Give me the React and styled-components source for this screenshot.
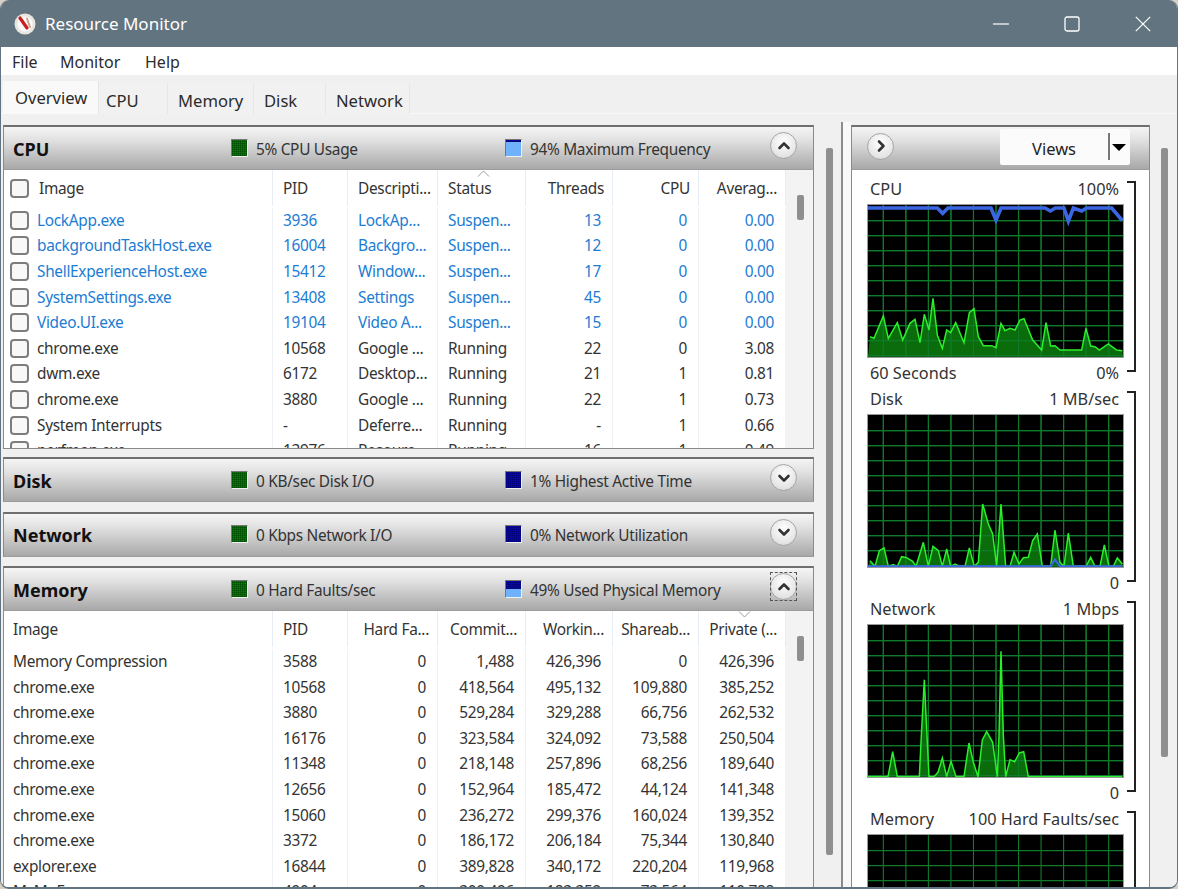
import styled, { createGlobalStyle } from 'styled-components';

const GlobalStyle = createGlobalStyle`
  html, body {
    margin: 0;
    padding: 0;
    background: #d8cfc8;
  }
  * {
    box-sizing: border-box;
  }
`;

const Window = styled.div`
  width: 1178px;
  height: 889px;
  display: flex;
  flex-direction: column;
  overflow: hidden;
  background: #f0f0f0;
  border: solid #62747f;
  border-width: 0 1px 2px 1px;
  border-radius: 9px 9px 9px 9px;
  font-family: 'Noto Sans', 'Open Sans', sans-serif;
  font-size: 15.4px;
  letter-spacing: -0.3px;
  color: #2b2b2b;
`;

const TitleBar = styled.div`
  flex: none;
  height: 47px;
  margin: 0 -1px;
  background: #62747f;
  color: #fff;
  display: flex;
  align-items: center;
  padding-left: 14px;
  font-size: 17px;
  letter-spacing: 0;
`;

const AppIcon = styled.svg`
  width: 22px;
  height: 22px;
  margin-right: 9px;
`;

const TitleControls = styled.div`
  margin-left: auto;
  display: flex;
  height: 100%;
`;

const ControlButton = styled.div`
  width: 71px;
  display: flex;
  align-items: center;
  justify-content: center;
`;

const MenuBar = styled.div`
  flex: none;
  height: 28px;
  padding: 1px 0 0 11px;
  background: #fff;
  display: grid;
  grid-template-columns: 48px 85px auto;
  align-items: center;
  font-size: 16px;
  letter-spacing: 0;
`;

const TabStrip = styled.div`
  flex: none;
  height: 39px;
  padding: 6px 0 0 2px;
  display: flex;
  align-items: flex-start;
  background: #f0f0f0;
  border-bottom: 1px solid #f8f8f8;
`;

const Tab = styled.div`
  height: ${(p) => (p.$active ? 33 : 30)}px;
  width: ${(p) => p.$width}px;
  margin-top: ${(p) => (p.$active ? 0 : 3)}px;
  padding-left: ${(p) => p.$pad}px;
  line-height: 34px;
  background: ${(p) => (p.$active ? '#f9f9f9' : '#f1f1f1')};
  border-right: 1px solid #e6e6e6;
  font-size: 16.6px;
  letter-spacing: 0;
`;

const Main = styled.div`
  flex: 1;
  min-height: 0;
  display: flex;
  padding-top: 8px;
  background: #f0f0f0;
`;

const LeftColumn = styled.div`
  flex: none;
  width: 811px;
  margin-left: 2px;
  display: flex;
  flex-direction: column;
  gap: 9.4px;
  padding-top: 3px;
`;

const Section = styled.section`
  flex: ${(p) => (p.$grow ? '1 0 auto' : 'none')};
  border: solid #8a8a8a;
  border-width: 0 1px;
  ${(p) => (p.$boxed ? 'border-bottom-width: 1px; margin-bottom: -1px;' : '')}
`;

const SectionBar = styled.div`
  height: 45px;
  padding-left: 9px;
  display: flex;
  align-items: center;
  border-top: 2px solid #6f6f6f;
  border-bottom: 1px solid #9c9c9c;
  background: linear-gradient(#f5f5f5, #e2e2e2 30%, #a8a8a8);
  position: relative;
  margin: 0 -1px;
  border-left: 1px solid #8a8a8a;
  border-right: 1px solid #8a8a8a;
`;

const SectionTitle = styled.h2`
  margin: 0;
  width: 218px;
  padding-top: 1px;
  font-size: 18px;
  font-weight: 700;
  letter-spacing: 0;
  color: #111;
`;

const LegendItem = styled.div`
  width: ${(p) => p.$width}px;
  display: flex;
  align-items: center;
  gap: 8px;
  color: #333;
  white-space: nowrap;
`;

const LegendText = styled.span`
  padding-top: 2px;
`;

const swatchGrid = (angle) =>
  `repeating-linear-gradient(${angle}deg, rgba(0, 0, 0, 0.22) 0 1px, transparent 1px 2px)`;

const Swatch = styled.span`
  width: 17px;
  height: 18px;
  flex: none;
  margin-bottom: 1px;
  border: 1px solid #eef2ee;
  border-left-color: #777;
  border-top-color: #777;
  background:
    ${swatchGrid(0)} top / 100% ${(p) => p.$level}% no-repeat,
    ${swatchGrid(90)} top / 100% ${(p) => p.$level}% no-repeat,
    linear-gradient(${(p) => p.$fill} ${(p) => p.$level}%, #6fb1fb ${(p) => p.$level}%);
`;

const RoundButton = styled.button`
  position: absolute;
  right: 16px;
  top: 5px;
  width: 27px;
  height: 27px;
  padding: 0;
  border-radius: 50%;
  border: 1px solid #a5a5a5;
  background: radial-gradient(circle at 50% 35%, #ffffff, #e4e4e4 70%, #c8c8c8);
  display: flex;
  align-items: center;
  justify-content: center;
  ${(p) =>
    p.$focused
      ? `&::before {
          content: '';
          position: absolute;
          inset: -2px -1px;
          border: 1px dashed #555;
        }`
      : ''}
`;

const TableArea = styled.div`
  height: ${(p) => p.$height}px;
  background: #fff;
  overflow: hidden;
  display: grid;
  grid-template-columns: 1fr 27px;
`;

const Rows = styled.div`
  min-width: 0;
`;

const Columns = styled.div`
  display: grid;
  grid-template-columns: 269px 75px 90px 88px 87px 86px 87px;
  align-items: center;
`;

const HeaderRow = styled(Columns)`
  height: 36px;
  margin-bottom: 1.5px;
`;

const Row = styled(Columns)`
  height: 25.6px;
  color: ${(p) => (p.$suspended ? '#1b7cd3' : '#333')};
`;

const HeaderCell = styled.div`
  height: 100%;
  display: flex;
  align-items: center;
  justify-content: ${(p) => (p.$right ? 'flex-end' : 'flex-start')};
  padding: 0 ${(p) => (p.$right ? 8 : 4)}px 0 10px;
  border-right: 1px solid #e6edf4;
  position: relative;
  white-space: nowrap;
  color: #333;
`;

const Cell = styled.div`
  height: 100%;
  display: flex;
  align-items: center;
  justify-content: ${(p) => (p.$right ? 'flex-end' : 'flex-start')};
  padding: 0 ${(p) => (p.$right ? 11 : 4)}px 0 10px;
  border-right: 1px solid #eef2f7;
  white-space: nowrap;
  overflow: hidden;
`;

const ImageCell = styled(Cell)`
  padding-left: ${(p) => (p.$check ? 6 : 9)}px;
  gap: 8px;
`;

const ImageHeader = styled(HeaderCell)`
  padding-left: ${(p) => (p.$check ? 6 : 9)}px;
  gap: 10px;
`;

const CheckBox = styled.span`
  width: 19px;
  height: 19px;
  flex: none;
  border: 2px solid #7d7d7d;
  border-radius: 4px;
  background: #f8f8f8;
`;

const SortMark = styled.svg`
  position: absolute;
  top: ${(p) => p.$top}px;
  left: ${(p) => p.$left}px;
  width: 13px;
  height: 7px;
`;

const TableGutter = styled.div`
  background: #f3f3f3;
  padding: 25px 0 0 11px;
`;

const Thumb = styled.div`
  width: ${(p) => p.$width}px;
  height: ${(p) => p.$height}px;
  background: #8f8f8f;
  border-radius: 2px;
`;

const PageGutter = styled.div`
  flex: none;
  width: ${(p) => p.$width}px;
  padding: 26px 0 0 ${(p) => p.$left}px;
  background: #f0f0f0;
  ${(p) => (p.$divider ? 'border-right: 2px solid #8b8b8b;' : '')}
`;

const Spacer = styled.div`
  flex: none;
  width: 8px;
  background: #f8f8f8;
`;

const RightPanel = styled.div`
  flex: none;
  width: 299px;
  margin-top: 3px;
  background: #fff;
  border: solid #8a8a8a;
  border-width: 0 1px;
  box-shadow: 3px 0 0 #f8f8f8;
`;

const PanelBar = styled(SectionBar)`
  padding-left: 15px;
`;

const PanelArrow = styled(RoundButton)`
  position: static;
  margin-bottom: 4px;
`;

const ViewsButton = styled.div`
  position: absolute;
  left: 148px;
  top: 2px;
  width: 130px;
  height: 36px;
  padding: 2px 0 0 32px;
  border-radius: 2px;
  background: #fbfbfb;
  display: flex;
  align-items: center;
  font-size: 16.5px;
  letter-spacing: 0;
  color: #222;
`;

const ViewsDivider = styled.span`
  position: absolute;
  left: 108px;
  top: 4px;
  width: 2px;
  height: 27px;
  background: #777;
`;

const ViewsArrow = styled.span`
  position: absolute;
  left: 112px;
  top: 15px;
  border: solid transparent;
  border-width: 7px 7px 0;
  border-top-color: #000;
`;

const GraphList = styled.div`
  padding: 8px 0 0 16px;
`;

const GraphBlock = styled.div`
  height: 210px;
  display: grid;
  grid-template-columns: 255px 13px;
  grid-template-rows: 27px 152px 31px;
  column-gap: 4px;
`;

const GraphLabels = styled.div`
  grid-column: 1;
  display: flex;
  justify-content: space-between;
  align-items: ${(p) => (p.$bottom ? 'center' : 'flex-start')};
  padding: 0 4px 0 2px;
  color: #333;
  font-size: 16.3px;
  letter-spacing: 0;
  line-height: 22px;
`;

const Bracket = styled.div`
  grid-column: 2;
  grid-row: 1 / 4;
  height: 191px;
  margin-top: 3px;
  border: solid #222;
  border-width: 2px 2px 2px 0;
  width: 9px;
`;

const GraphFrame = styled.div`
  grid-column: 1;
  background: #000;
  box-shadow: 0 0 0 1px #9a9a9a;
  overflow: hidden;
`;

const GraphSvg = styled.svg`
  display: block;
  width: 255px;
  height: 152px;
`;

const cpuRows = [
  ['LockApp.exe', '3936', 'LockAp...', 'Suspen...', '13', '0', '0.00', true],
  ['backgroundTaskHost.exe', '16004', 'Backgro...', 'Suspen...', '12', '0', '0.00', true],
  ['ShellExperienceHost.exe', '15412', 'Window...', 'Suspen...', '17', '0', '0.00', true],
  ['SystemSettings.exe', '13408', 'Settings', 'Suspen...', '45', '0', '0.00', true],
  ['Video.UI.exe', '19104', 'Video A...', 'Suspen...', '15', '0', '0.00', true],
  ['chrome.exe', '10568', 'Google ...', 'Running', '22', '0', '3.08'],
  ['dwm.exe', '6172', 'Desktop...', 'Running', '21', '1', '0.81'],
  ['chrome.exe', '3880', 'Google ...', 'Running', '22', '1', '0.73'],
  ['System Interrupts', '-', 'Deferre...', 'Running', '-', '1', '0.66'],
  ['perfmon.exe', '13976', 'Resourc...', 'Running', '16', '1', '0.49'],
];

const memoryRows = [
  ['Memory Compression', '3588', '0', '1,488', '426,396', '0', '426,396'],
  ['chrome.exe', '10568', '0', '418,564', '495,132', '109,880', '385,252'],
  ['chrome.exe', '3880', '0', '529,284', '329,288', '66,756', '262,532'],
  ['chrome.exe', '16176', '0', '323,584', '324,092', '73,588', '250,504'],
  ['chrome.exe', '11348', '0', '218,148', '257,896', '68,256', '189,640'],
  ['chrome.exe', '12656', '0', '152,964', '185,472', '44,124', '141,348'],
  ['chrome.exe', '15060', '0', '236,272', '299,376', '160,024', '139,352'],
  ['chrome.exe', '3372', '0', '186,172', '206,184', '75,344', '130,840'],
  ['explorer.exe', '16844', '0', '389,828', '340,172', '220,204', '119,968'],
  ['MsMpEng.exe', '4904', '0', '300,496', '183,352', '73,564', '110,788'],
];

// graph traces, traced in 3x reference pixels so they line up with the grid
const cpuLoad = '30,470 42,475 70,408 85,475 112,428 128,480 150,430 165,418 180,488 193,403 207,450 219,355 232,465 247,505 260,450 272,458 287,428 312,488 328,398 342,386 355,470 370,497 395,497 408,503 423,430 435,452 450,445 465,450 480,420 492,416 518,480 545,510 558,428 572,498 585,497 600,510 650,510 665,510 678,445 692,498 705,500 718,510 745,492 770,510 787,512';
const cpuFreq = '24,84 232,84 248,100 264,84 393,84 408,120 423,84 555,84 571,93 586,84 612,84 625,123 640,84 665,93 680,84 755,84 787,122';
const diskLoad = '30,525 45,542 58,495 72,487 85,542 100,537 112,542 125,513 140,516 158,527 168,542 190,470 205,542 219,482 235,495 247,542 260,490 272,542 285,535 300,542 315,542 328,487 343,542 355,530 368,355 385,415 398,445 410,542 423,355 437,542 450,542 462,500 477,535 490,516 505,515 518,465 532,445 547,542 572,542 585,433 600,530 612,542 625,442 640,542 665,542 678,542 692,515 705,542 720,542 733,478 747,542 760,542 772,517 787,535';
const diskActive = '24,542 570,542 585,522 600,542 787,542';
const netLoad = '24,543 84,543 98,468 112,543 178,543 185,400 193,252 200,400 207,543 222,543 234,530 247,487 260,543 273,497 288,543 312,543 327,442 340,500 354,543 367,433 380,408 398,440 412,543 417,420 423,167 430,420 437,543 450,492 464,498 478,472 491,468 505,543 787,543';

function GridLines({ top }) {
  const xs = Array.from({ length: 11 }, (_, i) => 70 + i * 67.6);
  const ys = Array.from({ length: 10 }, (_, i) => top + 47 + i * 45);
  return (
    <g stroke="#0f7a2a" strokeWidth="3.4">
      {xs.map((x) => (
        <line key={x} x1={x} x2={x} y1={top} y2={top + 460} />
      ))}
      {ys.map((y) => (
        <line key={y} x1="24" x2="789" y1={y} y2={y} />
      ))}
    </g>
  );
}

function Graph({ top, load, line, lineWidth }) {
  const base = top + 455;
  return (
    <GraphFrame>
      <GraphSvg viewBox={`24 ${top} 765 456`} preserveAspectRatio="none">
        <GridLines top={top} />
        {load && (
          <>
            <polygon points={`24,${base} ${load} 789,${base}`} fill="#0c7f0c" fillOpacity="0.85" />
            <GridLines top={top} />
            <polyline points={load} fill="none" stroke="#2bef2b" strokeWidth="4.5" />
          </>
        )}
        {line && <polyline points={line} fill="none" stroke="#3a66e4" strokeWidth={lineWidth} />}
      </GraphSvg>
    </GraphFrame>
  );
}

function GraphPanel({ name, max, left, min, top, load, line, lineWidth }) {
  return (
    <GraphBlock>
      <GraphLabels>
        <span>{name}</span>
        <span>{max}</span>
      </GraphLabels>
      <Bracket />
      <Graph top={top} load={load} line={line} lineWidth={lineWidth} />
      <GraphLabels $bottom>
        <span>{left}</span>
        <span>{min}</span>
      </GraphLabels>
    </GraphBlock>
  );
}

function Chevron({ dir }) {
  const paths = {
    up: 'M2.5 9 7 4.5 11.5 9',
    down: 'M2.5 5 7 9.5 11.5 5',
    right: 'M5 2.5 9.5 7 5 11.5',
  };
  return (
    <svg width="14" height="14" viewBox="0 0 14 14">
      <path d={paths[dir]} fill="none" stroke="#333" strokeWidth="2.6" strokeLinecap="round" strokeLinejoin="round" />
    </svg>
  );
}

function Bar({ title, first, second, dir, focused, level }) {
  return (
    <SectionBar>
      <SectionTitle>{title}</SectionTitle>
      <LegendItem $width={274}>
        <Swatch $fill="#067f06" $level={100} />
        <LegendText>{first}</LegendText>
      </LegendItem>
      <LegendItem $width={240}>
        <Swatch $fill="#0505c0" $level={level} />
        <LegendText>{second}</LegendText>
      </LegendItem>
      <RoundButton $focused={focused}>
        <Chevron dir={dir} />
      </RoundButton>
    </SectionBar>
  );
}

export default function App() {
  return (
    <>
      <GlobalStyle />
      <Window>
        <TitleBar>
          <AppIcon viewBox="0 0 22 22">
            <circle cx="11" cy="11" r="10.5" fill="#e9e6e2" />
            <circle cx="11" cy="11" r="7.5" fill="#fbfbfb" />
            <path d="M6 5 13 15" stroke="#c81e1e" strokeWidth="3.2" strokeLinecap="round" />
            <path d="M13 5.5 16 14" stroke="#c9a58a" strokeWidth="2" strokeLinecap="round" />
          </AppIcon>
          Resource Monitor
          <TitleControls>
            <ControlButton>
              <svg width="16" height="2" viewBox="0 0 16 2">
                <line x1="0" x2="16" y1="1" y2="1" stroke="#fff" strokeWidth="1.2" />
              </svg>
            </ControlButton>
            <ControlButton>
              <svg width="16" height="16" viewBox="0 0 16 16">
                <rect x="1" y="1" width="14" height="14" rx="2" fill="none" stroke="#fff" strokeWidth="1.3" />
              </svg>
            </ControlButton>
            <ControlButton>
              <svg width="16" height="16" viewBox="0 0 16 16">
                <path d="M.8.8 15.2 15.2M15.2.8.8 15.2" stroke="#fff" strokeWidth="1.2" />
              </svg>
            </ControlButton>
          </TitleControls>
        </TitleBar>
        <MenuBar>
          <span>File</span>
          <span>Monitor</span>
          <span>Help</span>
        </MenuBar>
        <TabStrip>
          <Tab $active $width={96} $pad={12}>Overview</Tab>
          <Tab $width={69} $pad={7}>CPU</Tab>
          <Tab $width={86} $pad={10}>Memory</Tab>
          <Tab $width={72} $pad={10}>Disk</Tab>
          <Tab $width={84} $pad={10}>Network</Tab>
        </TabStrip>
        <Main>
          <LeftColumn>
            <Section $boxed>
              <Bar title="CPU" first="5% CPU Usage" second="94% Maximum Frequency" dir="up" level={12} />
              <TableArea $height={278}>
                <Rows>
                  <HeaderRow>
                    <ImageHeader $check>
                      <CheckBox />
                      Image
                    </ImageHeader>
                    <HeaderCell>PID</HeaderCell>
                    <HeaderCell>Descripti...</HeaderCell>
                    <HeaderCell>
                      <SortMark $top={0} $left={39} viewBox="0 0 13 7">
                        <path d="M1 6.5 6.5 1 12 6.5" fill="none" stroke="#9a9a9a" />
                      </SortMark>
                      Status
                    </HeaderCell>
                    <HeaderCell $right>Threads</HeaderCell>
                    <HeaderCell $right>CPU</HeaderCell>
                    <HeaderCell $right>Averag...</HeaderCell>
                  </HeaderRow>
                  {cpuRows.map((r, i) => (
                    <Row key={i} $suspended={r[7]}>
                      <ImageCell $check>
                        <CheckBox />
                        {r[0]}
                      </ImageCell>
                      <Cell>{r[1]}</Cell>
                      <Cell>{r[2]}</Cell>
                      <Cell>{r[3]}</Cell>
                      <Cell $right>{r[4]}</Cell>
                      <Cell $right>{r[5]}</Cell>
                      <Cell $right>{r[6]}</Cell>
                    </Row>
                  ))}
                </Rows>
                <TableGutter>
                  <Thumb $width={7} $height={25} />
                </TableGutter>
              </TableArea>
            </Section>
            <Section>
              <Bar title="Disk" first="0 KB/sec Disk I/O" second="1% Highest Active Time" dir="down" level={100} />
            </Section>
            <Section>
              <Bar title="Network" first="0 Kbps Network I/O" second="0% Network Utilization" dir="down" level={100} />
            </Section>
            <Section $grow>
              <Bar title="Memory" first="0 Hard Faults/sec" second="49% Used Physical Memory" dir="up" focused level={50} />
              <TableArea $height={280}>
                <Rows>
                  <HeaderRow>
                    <ImageHeader>Image</ImageHeader>
                    <HeaderCell>PID</HeaderCell>
                    <HeaderCell $right>Hard Fa...</HeaderCell>
                    <HeaderCell $right>Commit...</HeaderCell>
                    <HeaderCell $right>Workin...</HeaderCell>
                    <HeaderCell $right>Shareab...</HeaderCell>
                    <HeaderCell $right>
                      <SortMark $top={0} $left={39} viewBox="0 0 13 7">
                        <path d="M1 .5 6.5 6 12 .5" fill="none" stroke="#9a9a9a" />
                      </SortMark>
                      Private (...
                    </HeaderCell>
                  </HeaderRow>
                  {memoryRows.map((r, i) => (
                    <Row key={i}>
                      <ImageCell>{r[0]}</ImageCell>
                      <Cell>{r[1]}</Cell>
                      {r.slice(2).map((v, j) => (
                        <Cell key={j} $right>{v}</Cell>
                      ))}
                    </Row>
                  ))}
                </Rows>
                <TableGutter>
                  <Thumb $width={7} $height={25} />
                </TableGutter>
              </TableArea>
            </Section>
          </LeftColumn>
          <PageGutter $width={29} $left={12} $divider>
            <Thumb $width={7} $height={707} />
          </PageGutter>
          <Spacer />
          <RightPanel>
            <PanelBar>
              <PanelArrow>
                <Chevron dir="right" />
              </PanelArrow>
              <ViewsButton>
                Views
                <ViewsDivider />
                <ViewsArrow />
              </ViewsButton>
            </PanelBar>
            <GraphList>
              <GraphPanel name="CPU" max="100%" left="60 Seconds" min="0%" top={75} load={cpuLoad} line={cpuFreq} lineWidth={11} />
              <GraphPanel name="Disk" max="1 MB/sec" min="0" top={88} load={diskLoad} line={diskActive} lineWidth={7} />
              <GraphPanel name="Network" max="1 Mbps" min="0" top={88} load={netLoad} />
              <GraphPanel name="Memory" max="100 Hard Faults/sec" min="0" top={88} />
            </GraphList>
          </RightPanel>
          <PageGutter $width={26} $left={11}>
            <Thumb $width={7} $height={609} />
          </PageGutter>
        </Main>
      </Window>
    </>
  );
}
